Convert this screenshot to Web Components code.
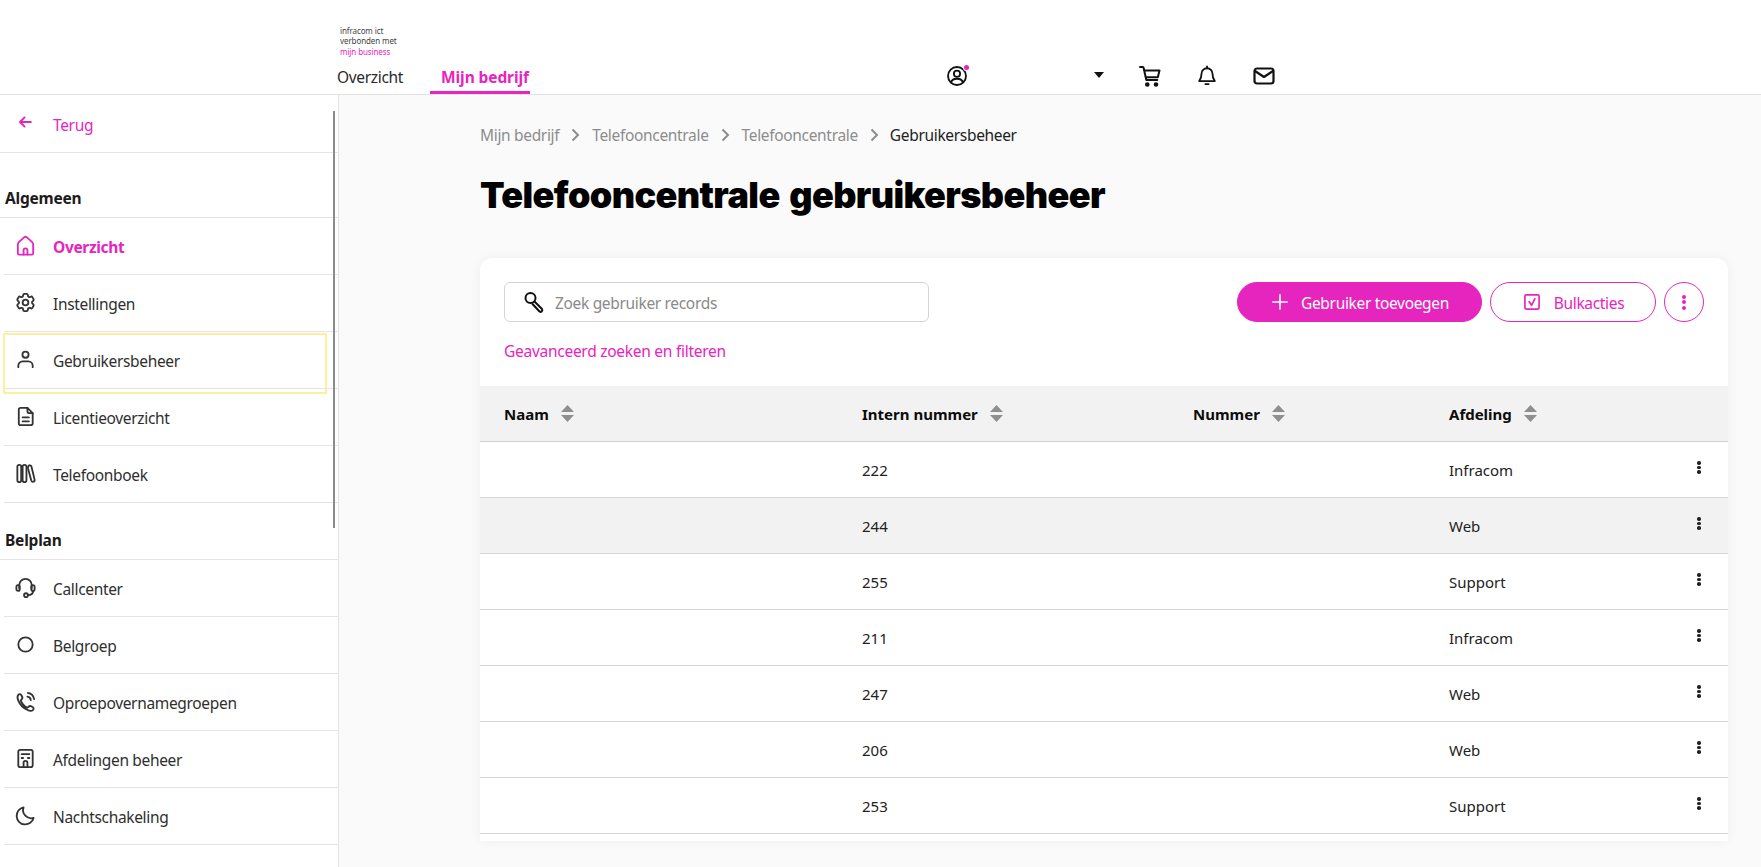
<!DOCTYPE html>
<html lang="nl">
<head>
<meta charset="utf-8">
<title>Telefooncentrale gebruikersbeheer</title>
<style>
html,body{margin:0;padding:0;height:100%;overflow:hidden;background:#fafafa;font-family:"Noto Sans","Open Sans",sans-serif;}
</style>
</head>
<body>
<x-app></x-app>
<script>
const PINK='#e625bf';
const LS='-.33px';
const ICONS={
 arrow:'<path d="M19 12H6M11.500 6.500 6 12l5.500 5.500"/>',
 home:'<path d="M4 20v-9c0-1 .4-1.800 1.100-2.500l5.400-5a2.200 2.200 0 0 1 3 0l5.400 5c.7.7 1.100 1.500 1.100 2.500v9a1.500 1.500 0 0 1-1.500 1.500h-13A1.500 1.500 0 0 1 4 20z"/><path d="M10 21.500V17a2 2 0 0 1 4 0v4.500"/>',
 gear:'<path d="M9.594 3.940c.09-.542.56-.94 1.110-.94h2.593c.55 0 1.020.398 1.110.94l.213 1.281c.063.374.313.686.645.87.074.04.147.083.22.127.325.196.72.257 1.075.124l1.217-.456a1.125 1.125 0 0 1 1.370.49l1.296 2.247a1.125 1.125 0 0 1-.26 1.431l-1.003.827c-.293.241-.438.613-.43.992a7.723 7.723 0 0 1 0 .255c-.008.378.137.75.43.991l1.004.827c.424.35.534.955.26 1.430l-1.298 2.247a1.125 1.125 0 0 1-1.369.491l-1.217-.456c-.355-.133-.75-.072-1.076.124a6.470 6.470 0 0 1-.22.128c-.331.183-.581.495-.644.869l-.213 1.281c-.09.543-.56.94-1.110.94h-2.594c-.55 0-1.019-.398-1.110-.94l-.213-1.281c-.062-.374-.312-.686-.644-.87a6.520 6.520 0 0 1-.22-.127c-.325-.196-.72-.257-1.076-.124l-1.217.456a1.125 1.125 0 0 1-1.369-.49l-1.297-2.247a1.125 1.125 0 0 1 .26-1.431l1.004-.827c.292-.24.437-.613.43-.991a6.932 6.932 0 0 1 0-.255c.007-.38-.138-.751-.43-.992l-1.004-.827a1.125 1.125 0 0 1-.26-1.430l1.297-2.247a1.125 1.125 0 0 1 1.370-.491l1.216.456c.356.133.751.072 1.076-.124.072-.044.146-.086.22-.128.332-.183.582-.495.644-.869z"/><circle cx="12" cy="12" r="3"/>',
 person:'<circle cx="12" cy="7" r="3.200"/><path d="M4.500 20v-1.500a4.500 4.500 0 0 1 4.500-4.500h6a4.500 4.500 0 0 1 4.500 4.500V20"/>',
 doc:'<path d="M7 3h7l5.500 5.500V19a2 2 0 0 1-2 2H7a2 2 0 0 1-2-2V5a2 2 0 0 1 2-2z"/><path d="M14 3v3.500a2 2 0 0 0 2 2h3.500M9 13h6.500M9 17h6.500"/>',
 books:'<rect x="3.500" y="3" width="4" height="18" rx="2"/><rect x="9" y="3" width="4" height="18" rx="2"/><path d="M14.800 4.500c.9-1.700 3-1.200 3.400.2l3.300 13.700c.5 2.200-2.700 3.300-3.500.9L14.600 6.500c-.1-.7 0-1.400.2-2z"/>',
 headset:'<path d="M5.500 13V9.500a6.500 6.500 0 0 1 13 0V13"/><rect x="2.500" y="9.500" width="3.500" height="6" rx="1.700"/><rect x="18" y="9.500" width="3.500" height="6" rx="1.700"/><path d="M20 15.500c0 3-2 4.500-5.500 4.500"/><circle cx="12.500" cy="20" r="2"/>',
 circle:'<circle cx="12" cy="12" r="7.500"/>',
 phone:'<path d="M15 17.500c1.500-1.500 3.500-.5 4.800.6 1 .9.9 2-.1 2.900-1 .9-3 1.200-6-.4a18 18 0 0 1-9.300-9.800C3.300 8 3.500 6 4.500 5c1-.9 2.100-1 2.900 0 1.100 1.300 2.100 3.300.6 4.800l-1 1a13 13 0 0 0 7 7.700z"/><path d="M14 7a4 4 0 0 1 3.500 3.500M14.500 3a8 8 0 0 1 6.500 6.500"/>',
 building:'<rect x="4.500" y="3" width="15" height="18" rx="2"/><path d="M8 7.500h8M8 11.500h1.500M14.500 11.500H16M10 21v-4.500a2 2 0 0 1 4 0V21"/>',
 moon:'<path d="M10 3.500a8.500 8.500 0 0 0 10.500 11A9 9 0 1 1 10 3.500z"/>',
 user:'<circle cx="12" cy="12" r="9.800"/><circle cx="12" cy="9.500" r="3.400"/><path d="M5.500 19c.8-2.800 3-4 6.500-4s5.700 1.200 6.500 4"/>',
 cart:'<path d="M2 3h2.600a1 1 0 0 1 1 .8L8.300 16h11M6 6.500h15.500l-1.700 6.800H7.600"/><circle cx="9.300" cy="20.500" r="1.300" fill="currentColor"/><circle cx="18" cy="20.500" r="1.300" fill="currentColor"/>',
 bell:'<path d="M12 3.500a6 6 0 0 0-6 6c0 5-1.300 6.500-2.500 8h17c-1.200-1.500-2.500-3-2.500-8a6 6 0 0 0-6-6z"/><path d="M12 1.500v2M10.200 20.800h3.600" />',
 mail:'<rect x="2.500" y="4.500" width="19" height="15" rx="2.500"/><path d="M3 7l9 6 9-6"/>',
 search:'<circle cx="8.500" cy="8" r="5"/><path d="m12.500 11.500 7.500 7.500a1.800 1.800 0 0 1-2.500 2.500L10.500 14"/>',
 plus:'<path d="M12 3.500v17M3.500 12h17"/>',
 check:'<rect x="3.500" y="3.500" width="17" height="17" rx="1.500"/><path d="M8.500 11.500 11.500 16 15.500 8"/>',
};
class XIcon extends HTMLElement{
 connectedCallback(){
  if(this.shadowRoot)return;
  const s=this.getAttribute('size')||22, w=this.getAttribute('stroke')||2;
  this.attachShadow({mode:'open'}).innerHTML=`<style>:host{display:inline-flex;flex:none;line-height:0}svg{display:block}</style><svg width="${s}" height="${s}" viewBox="0 0 24 24" fill="none" stroke="currentColor" stroke-width="${w}" stroke-linecap="round" stroke-linejoin="round">${ICONS[this.getAttribute('name')]}</svg>`;
 }
}
customElements.define('x-icon',XIcon);

class XKebab extends HTMLElement{
 constructor(){super();this.attachShadow({mode:'open'}).innerHTML=`<style>:host{display:inline-flex;flex-direction:column;gap:var(--g,1.500px);flex:none}i{width:var(--d,4px);height:var(--d,4px);border-radius:50%;background:currentColor;display:block}</style><i></i><i></i><i></i>`;}
}
customElements.define('x-kebab',XKebab);

class XSort extends HTMLElement{
 constructor(){super();this.attachShadow({mode:'open'}).innerHTML=`<style>:host{display:inline-flex;flex:none;line-height:0}</style><svg width="13" height="17" viewBox="0 0 13 17" fill="#8f8f8f"><path d="M6.500 0 13 7H0zM0 10h13l-6.500 7z"/></svg>`;}
}
customElements.define('x-sort',XSort);

class XTopbar extends HTMLElement{
 constructor(){super();this.attachShadow({mode:'open'}).innerHTML=`<style>
 :host{display:block;height:94px;background:#fff;border-bottom:1px solid #e2e2e2;position:relative;box-sizing:content-box}
 .wrap{height:94px;padding-left:337px;display:flex;flex-direction:column;justify-content:space-between;box-sizing:border-box}
 .logo{padding:25.500px 0 0 3px;font:8px/10.500px "Noto Sans",sans-serif;color:#444;letter-spacing:-.1px}
 .logo b{display:block;font-weight:400;color:${PINK}}
 .row{display:flex;align-items:flex-end;height:32px}
 .tab{height:32px;box-sizing:border-box;font-size:15.500px;line-height:30px;color:#2b2b2b;letter-spacing:${LS}}
 .tab.on{margin-left:27px;width:100px;padding-left:11px;color:${PINK};font-weight:700;letter-spacing:-.1px;border-bottom:3px solid ${PINK};white-space:nowrap}
 .tools{display:flex;align-items:center;height:30px;margin:0 0 3px 416px;color:#111}
 .u{position:relative;display:inline-flex}
 .u i{position:absolute;right:-1px;top:0;width:5px;height:5px;border-radius:50%;background:${PINK};box-shadow:0 0 0 1px #fff}
 .caret{width:0;height:0;border:5px solid transparent;border-top:6px solid #111;border-bottom:0;margin:-3px 0 0 126px}
 .cart{margin-left:34px}.bell{margin-left:34px}.mail{margin-left:34px}
 </style><div class="wrap"><div class="logo">infracom ict<br>verbonden met<b>mijn business</b></div>
 <div class="row"><div class="tab">Overzicht</div><div class="tab on">Mijn bedrijf</div>
 <div class="tools"><span class="u"><x-icon name="user" size="22" stroke="2"></x-icon><i></i></span><span class="caret"></span>
 <x-icon class="cart" name="cart" size="24" stroke="2"></x-icon><x-icon class="bell" name="bell" size="22" stroke="2"></x-icon><x-icon class="mail" name="mail" size="24" stroke="2.200"></x-icon></div></div></div>`;}
}
customElements.define('x-topbar',XTopbar);

class XNavItem extends HTMLElement{
 connectedCallback(){
  if(this.shadowRoot)return;
  const active=this.hasAttribute('active');
  this.attachShadow({mode:'open'}).innerHTML=`<style>
  :host{display:block;margin-left:4px;height:57px;box-sizing:border-box;border-bottom:1px solid #e4e4e4}
  .r{height:56px;display:flex;align-items:center;font-size:15.500px;letter-spacing:${LS};color:${active?PINK:'#2f2f2f'};font-weight:${active?700:400}}
  .ic{width:24px;display:flex;justify-content:center;margin:-1px 0 0 9px;color:${active?PINK:'#333'}}
  .t{margin-left:16px;padding-top:1px}
  </style><div class="r"><span class="ic"><x-icon name="${this.getAttribute('icon')}" size="23" stroke="${this.getAttribute('stroke')||1.900}"></x-icon></span><span class="t"><slot></slot></span></div>`;
 }
}
customElements.define('x-nav-item',XNavItem);

class XNavHeading extends HTMLElement{
 constructor(){super();this.attachShadow({mode:'open'}).innerHTML=`<style>
 :host{display:flex;align-items:flex-end;box-sizing:border-box;border-bottom:1px solid #e4e4e4;padding:0 0 8px 5px;font-size:15.500px;font-weight:700;color:#1c1c1c;line-height:22px;letter-spacing:-.2px}
 </style><slot></slot>`;}
}
customElements.define('x-nav-heading',XNavHeading);

class XSidebar extends HTMLElement{
 constructor(){super();this.attachShadow({mode:'open'}).innerHTML=`<style>
 :host{display:block;width:339px;flex:none;box-sizing:border-box;background:#fff;border-right:1px solid #e4e4e4;position:relative;overflow:hidden}
 .back{height:58px;box-sizing:border-box;border-bottom:1px solid #e4e4e4;display:flex;align-items:center;color:${PINK};font-size:15.500px;letter-spacing:${LS}}
 .back x-icon{margin:-3px 0 0 15px}.back span{margin-left:18px;padding-top:3px}
 .h1{height:65px}.h2{height:57px}
 .thumb{position:absolute;left:333px;top:16px;width:2px;height:417px;background:#8b8b8b}
 .focus{position:absolute;left:3px;top:238px;width:324px;height:61px;box-sizing:border-box;border:2px solid #fdf09c}
 </style>
 <div class="back"><x-icon name="arrow" size="20" stroke="2.300"></x-icon><span>Terug</span></div>
 <x-nav-heading class="h1">Algemeen</x-nav-heading>
 <x-nav-item icon="home" active>Overzicht</x-nav-item>
 <x-nav-item icon="gear">Instellingen</x-nav-item>
 <x-nav-item icon="person">Gebruikersbeheer</x-nav-item>
 <x-nav-item icon="doc">Licentieoverzicht</x-nav-item>
 <x-nav-item icon="books">Telefoonboek</x-nav-item>
 <x-nav-heading class="h2">Belplan</x-nav-heading>
 <x-nav-item icon="headset">Callcenter</x-nav-item>
 <x-nav-item icon="circle">Belgroep</x-nav-item>
 <x-nav-item icon="phone">Oproepovernamegroepen</x-nav-item>
 <x-nav-item icon="building">Afdelingen beheer</x-nav-item>
 <x-nav-item icon="moon">Nachtschakeling</x-nav-item>
 <div class="thumb"></div><div class="focus"></div>`;}
}
customElements.define('x-sidebar',XSidebar);

const CHEV='<svg width="9" height="14" viewBox="0 0 9 14" fill="none" stroke="#8d8d8d" stroke-width="2"><path d="m1.500 1.500 5.500 5.500-5.500 5.500"/></svg>';
class XBreadcrumb extends HTMLElement{
 constructor(){super();this.attachShadow({mode:'open'}).innerHTML=`<style>
 :host{display:flex;align-items:center;height:22px;font-size:15.500px;letter-spacing:${LS};color:#8d8d8d;white-space:nowrap}
 svg{margin:0 12px 0 12px;flex:none}
 b{font-weight:400;color:#222;margin-left:-1px}
 </style><span>Mijn bedrijf</span>${CHEV}<span>Telefooncentrale</span>${CHEV}<span>Telefooncentrale</span>${CHEV}<b>Gebruikersbeheer</b>`;}
}
customElements.define('x-breadcrumb',XBreadcrumb);

class XButton extends HTMLElement{
 constructor(){super();this.attachShadow({mode:'open'}).innerHTML=`<style>
 :host{display:inline-flex;align-items:center;justify-content:center;height:40px;box-sizing:border-box;border-radius:20px;border:1px solid ${PINK};color:${PINK};background:#fff;font-size:15.500px;letter-spacing:${LS};flex:none;white-space:nowrap}
 :host([primary]){background:${PINK};color:#fff}
 span{padding-top:2px;display:inline-flex;align-items:center}
 </style><span><slot></slot></span>`;}
}
customElements.define('x-button',XButton);

class XSearch extends HTMLElement{
 constructor(){super();this.attachShadow({mode:'open'}).innerHTML=`<style>
 :host{display:flex;align-items:center;width:425px;height:40px;box-sizing:border-box;border:1px solid #d4d4d4;border-radius:6px;background:#fff;padding-left:17px;color:#8a8a8a;font-size:15.500px;letter-spacing:${LS};flex:none}
 x-icon{color:#111;margin-right:9px}
 span{padding-top:2px}
 </style><x-icon name="search" size="24" stroke="2"></x-icon><span><slot></slot></span>`;}
}
customElements.define('x-search',XSearch);

class XRow extends HTMLElement{
 connectedCallback(){
  if(this.shadowRoot)return;
  this.attachShadow({mode:'open'}).innerHTML=`<style>
  :host{display:grid;grid-template-columns:358px 331px 256px 1fr 40px;align-items:center;height:56px;box-sizing:border-box;border-bottom:1px solid #d4d4d4;padding-left:24px;color:#222;font-size:15px;background:#fff}
  :host([alt]){background:#f2f2f2}
  x-kebab{--d:3.500px;--g:1px;color:#222;margin:-4px 0 0 9px}
  span{padding-top:1px}
  </style><span></span><span>${this.getAttribute('ext')}</span><span></span><span>${this.getAttribute('dep')}</span><x-kebab></x-kebab>`;
 }
}
customElements.define('x-row',XRow);

class XHeadRow extends HTMLElement{
 constructor(){super();this.attachShadow({mode:'open'}).innerHTML=`<style>
 :host{display:grid;grid-template-columns:358px 331px 256px 1fr 40px;align-items:center;height:56px;box-sizing:border-box;border-bottom:1px solid #d0d0d0;padding-left:24px;background:#f2f2f2;color:#0c0c0c;font-size:15px;font-weight:700}
 div{display:flex;align-items:center;gap:12px}
 </style><div>Naam<x-sort></x-sort></div><div>Intern nummer<x-sort></x-sort></div><div>Nummer<x-sort></x-sort></div><div>Afdeling<x-sort></x-sort></div><div></div>`;}
}
customElements.define('x-head-row',XHeadRow);

class XCard extends HTMLElement{
 constructor(){super();this.attachShadow({mode:'open'}).innerHTML=`<style>
 :host{display:block;width:1248px;height:583px;box-sizing:border-box;background:#fff;border-radius:12px 12px 0 0;box-shadow:0 0 12px rgba(0,0,0,.05);overflow:hidden}
 .top{height:128px;box-sizing:border-box;padding:24px 24px 0}
 .bar{display:flex;align-items:center}
 .sp{flex:1}
 .add{width:245px}.bulk{width:166px;margin-left:8px}.more{width:40px;margin-left:8px}
 .add x-icon{margin:-2px 11px 0 0}.bulk x-icon{margin:-2px 12px 0 0}.more x-kebab{margin-top:-2px}
 .link{color:${PINK};font-size:15.500px;letter-spacing:-.27px;margin-top:18px;line-height:22px}
 </style>
 <div class="top"><div class="bar"><x-search>Zoek gebruiker records</x-search><div class="sp"></div>
 <x-button primary class="add"><x-icon name="plus" size="20" stroke="2"></x-icon>Gebruiker toevoegen</x-button>
 <x-button class="bulk"><x-icon name="check" size="20" stroke="2"></x-icon>Bulkacties</x-button>
 <x-button class="more"><x-kebab></x-kebab></x-button></div>
 <div class="link">Geavanceerd zoeken en filteren</div></div>
 <x-head-row></x-head-row>
 <x-row ext="222" dep="Infracom"></x-row>
 <x-row ext="244" dep="Web" alt></x-row>
 <x-row ext="255" dep="Support"></x-row>
 <x-row ext="211" dep="Infracom"></x-row>
 <x-row ext="247" dep="Web"></x-row>
 <x-row ext="206" dep="Web"></x-row>
 <x-row ext="253" dep="Support"></x-row>`;}
}
customElements.define('x-card',XCard);

class XApp extends HTMLElement{
 constructor(){super();this.attachShadow({mode:'open'}).innerHTML=`<style>
 :host{display:flex;flex-direction:column;height:867px;width:1761px;overflow:hidden;background:#fafafa}
 .body{display:flex;flex:1;min-height:0}
 main{flex:1;min-width:0;padding:29px 0 0 141px;background:#fafafa}
 h1{margin:24px 0 38px;font:900 36px/50px Inter,sans-serif;letter-spacing:-.6px;word-spacing:3px;color:#000;white-space:nowrap}
 </style><x-topbar></x-topbar><div class="body"><x-sidebar></x-sidebar><main><x-breadcrumb></x-breadcrumb><h1>Telefooncentrale gebruikersbeheer</h1><x-card></x-card></main></div>`;}
}
customElements.define('x-app',XApp);
</script>
</body>
</html>
